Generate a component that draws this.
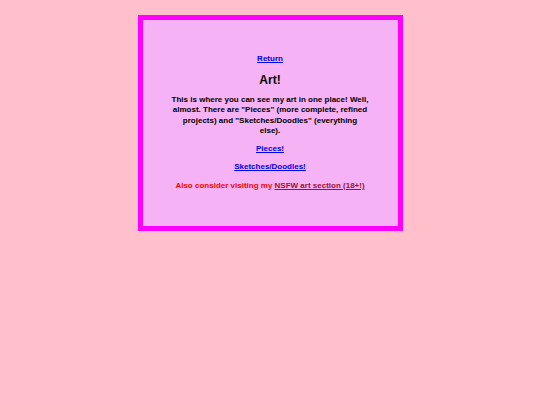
export default function App() {
  return (
    <div className="min-h-[405px] bg-[#ffc0cb] pt-[15px] font-['Liberation_Sans',sans-serif] font-bold">
      <div className="mx-auto w-[265px] h-[216px] border-[5px] border-[#ff00ff] bg-[#f5b3f5] px-[26px] pt-[34px] text-center text-[8px] leading-[10.5px] text-black">
        <p>
          <a href="#" className="text-[#0000ee] underline">Return</a>
        </p>
        <h1 className="mt-[8px] text-[12px] leading-[14px]">Art!</h1>
        <p className="mt-[8px]">
          This is where you can see my art in one place! Well, almost. There are "Pieces" (more complete, refined projects) and "Sketches/Doodles" (everything<br />else).
        </p>
        <p className="mt-[7px]">
          <a href="#" className="text-[#0000ee] underline">Pieces!</a>
        </p>
        <p className="mt-[8px]">
          <a href="#" className="text-[#0000ee] underline">Sketches/Doodles!</a>
        </p>
        <p className="mt-[8px] text-[#ff0000]">
          Also consider visiting my <a href="#" className="text-[#a01030] underline">NSFW art section (18+!)</a>
        </p>
      </div>
    </div>
  )
}
